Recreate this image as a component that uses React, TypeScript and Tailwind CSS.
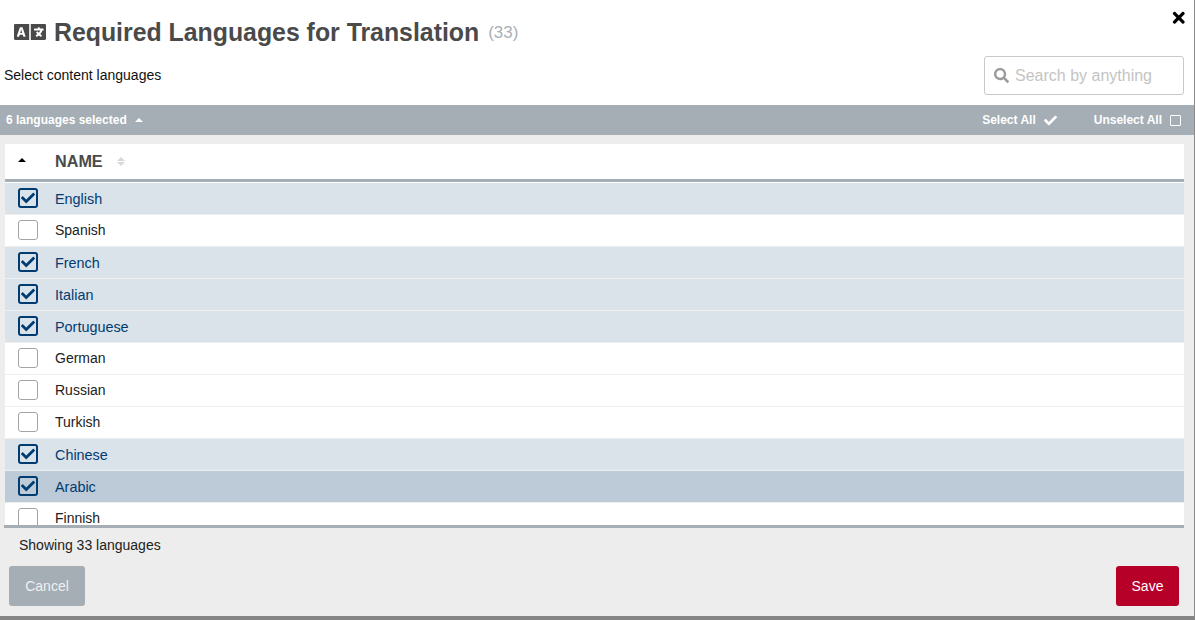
import React from "react";
import { FaCheck, FaLanguage, FaSearch, FaTimes } from "react-icons/fa";

const rows = [
  { name: "English", on: true },
  { name: "Spanish", on: false },
  { name: "French", on: true },
  { name: "Italian", on: true },
  { name: "Portuguese", on: true },
  { name: "German", on: false },
  { name: "Russian", on: false },
  { name: "Turkish", on: false },
  { name: "Chinese", on: true },
  { name: "Arabic", on: true, hover: true },
  { name: "Finnish", on: false },
];

const Row = ({ name, on, hover }: { name: string; on: boolean; hover?: boolean }) => (
  <div
    className={`flex items-center h-[32px] shrink-0 border-b border-[#eeeeee] ${
      hover ? "bg-[#bdcbd9]" : on ? "bg-[#dae2ea]" : "bg-white"
    }`}
  >
    <div className="w-[50px] flex pl-[13px]">
      {on ? (
        <div className="w-[20px] h-[20px] rounded-[3px] border-2 border-[#003c71] flex items-center justify-center -mt-[2px]">
          <FaCheck className="text-[#003c71] text-[14px]" />
        </div>
      ) : (
        <div className="w-[20px] h-[20px] rounded-[3px] border border-[#a5a5a5] bg-white -mt-[2px]" />
      )}
    </div>
    <span className={on ? "text-[14.4px] text-[#003c71] mt-[2px]" : "text-[14px] text-[#222222]"}>{name}</span>
  </div>
);

const App = () => {
  return (
    <div className="w-[1195px] h-[620px] flex flex-col overflow-hidden font-['Liberation_Sans',Arial,sans-serif] bg-[#ededed] border-r border-[#8a8a8a] border-b-4 border-b-[#858585]">
      <div className="h-[105px] bg-white shrink-0 flex flex-col relative">
        <div className="flex items-center h-[65px] pl-[14px]">
          <FaLanguage className="text-[#4a4a4a] text-[32px] w-[32px] mr-[8px] mt-[-2px]" />
          <h1 className="text-[24.85px] font-bold text-[#4a4a4a] leading-none mt-[1px]">Required Languages for Translation</h1>
          <span className="text-[17px] text-[#a9b0b8] ml-[9px] mt-[1px]">(33)</span>
        </div>
        <FaTimes className="absolute top-[9px] right-[7px] text-[17.5px] text-black" />
        <div className="flex items-center justify-between pl-[4px] pr-[10px] -mt-[9px]">
          <span className="text-[14px] text-[#111111]">Select content languages</span>
          <div className="w-[200px] h-[39px] border border-[#c9c9c9] rounded-[3px] flex items-center pl-[9px] gap-[6px]">
            <FaSearch className="text-[#9a9a9a] text-[15px]" />
            <span className="text-[16px] text-[#c4c4c4]">Search by anything</span>
          </div>
        </div>
      </div>

      <div className="h-[30px] shrink-0 bg-[#a5adb5] flex items-center justify-between pl-[6px] pr-[13px] text-white text-[12px] font-bold">
        <div className="flex items-center gap-[8px]">
          <span>6 languages selected</span>
          <span className="w-0 h-0 border-x-[4px] border-x-transparent border-b-[4px] border-b-white" />
        </div>
        <div className="flex items-center">
          <span>Select All</span>
          <FaCheck className="ml-[8px] text-[13px]" />
          <span className="ml-[37px]">Unselect All</span>
          <span className="ml-[8px] w-[11px] h-[11px] border border-white rounded-[1px]" />
        </div>
      </div>

      <div className="flex-1 flex flex-col pt-[9px] min-h-0">
        <div className="ml-[4px] w-[1180px] h-[384px] flex flex-col border-b-[3px] border-[#a5adb5] overflow-hidden">
          <div className="h-[38px] shrink-0 bg-white border-b-[3px] border-[#a5adb5] flex items-center ml-[1px]">
            <div className="w-[34px] flex justify-center -mt-[4px]">
              <span className="w-0 h-0 border-x-[4px] border-x-transparent border-b-[4px] border-b-black" />
            </div>
            <span className="ml-[16px] text-[16.2px] font-bold text-[#4a4a4a]">NAME</span>
            <span className="ml-[14px] flex flex-col gap-[1px]">
              <span className="w-0 h-0 border-x-[4px] border-x-transparent border-b-[4px] border-b-[#d8d8d8]" />
              <span className="w-0 h-0 border-x-[4px] border-x-transparent border-t-[4px] border-t-[#d8d8d8]" />
            </span>
          </div>
          <div className="flex-1 overflow-hidden ml-[1px] pt-[1px] bg-white flex flex-col">
            {rows.map((r) => (
              <Row key={r.name} name={r.name} on={r.on} hover={r.hover} />
            ))}
          </div>
        </div>
        <div className="pl-[19px] pt-[9px] text-[14px] text-[#222222] leading-[17px]">Showing 33 languages</div>
        <div className="flex justify-between pl-[9px] pr-[15px] mt-[12px]">
          <button className="w-[76px] h-[40px] rounded-[3px] bg-[#a5adb5] text-[#eef0f2] text-[14px]">Cancel</button>
          <button className="w-[63px] h-[40px] rounded-[3px] bg-[#b70027] text-white text-[14px]">Save</button>
        </div>
      </div>
    </div>
  );
};

export default App;
